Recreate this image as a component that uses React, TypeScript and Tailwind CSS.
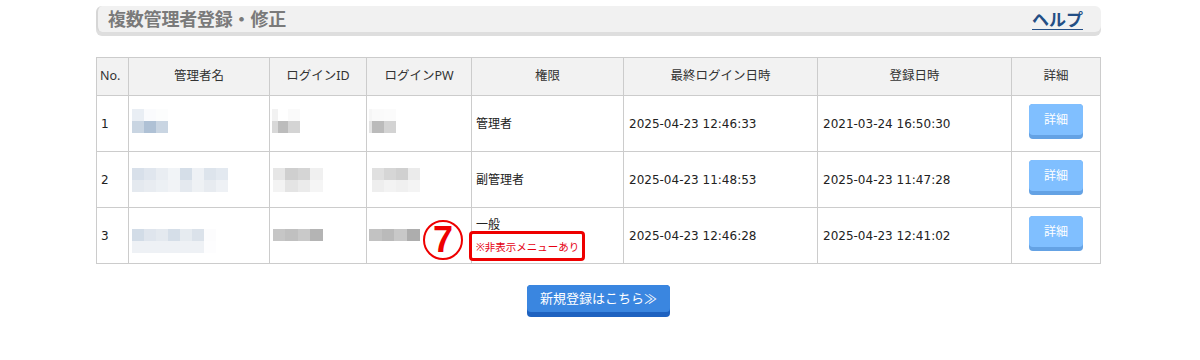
import React from "react";

type Blur = {
  widths: number[];
  rows: string[][];
  cls: string;
};

type Admin = {
  no: number;
  name: Blur;
  id: Blur;
  pw: Blur;
  role: string;
  lastLogin: string;
  created: string;
  note?: string;
};

const ADMINS: Admin[] = [
  {
    no: 1,
    name: {
      widths: [12, 12, 12],
      rows: [
        ["#e9eef4", "#fafbfd", "#fcfdfd"],
        ["#c9d5e2", "#afc1d5", "#c9d5e2"],
      ],
      cls: "ml-[3px] -translate-y-[3px]",
    },
    id: {
      widths: [6, 10, 12],
      rows: [
        ["#f2f2f2", "#ffffff", "#fafafa"],
        ["#d8d8d8", "#bcbcbc", "#d4d4d4"],
      ],
      cls: "ml-[2px] -translate-y-[3px]",
    },
    pw: {
      widths: [3, 12, 12],
      rows: [
        ["#f6f6f6", "#fafafa", "#fbfbfb"],
        ["#e4e4e4", "#bbbbbb", "#d3d3d3"],
      ],
      cls: "ml-[2px] -translate-y-[3px]",
    },
    role: "管理者",
    lastLogin: "2025-04-23 12:46:33",
    created: "2021-03-24 16:50:30",
  },
  {
    no: 2,
    name: {
      widths: [12, 12, 12, 12, 12, 12, 12, 12],
      rows: [
        ["#d8e0ea", "#e0e6ee", "#e9edf2", "#f1f4f7", "#d5dee8", "#eef1f5", "#dde4ec", "#e3e9f0"],
        ["#e4e9ef", "#e8ecf1", "#ecf0f4", "#f1f3f6", "#e4e9ef", "#eef1f4", "#e7ebf0", "#eef1f5"],
      ],
      cls: "ml-[3px]",
    },
    id: {
      widths: [12, 13, 12, 13],
      rows: [
        ["#e6e6e6", "#cfcfcf", "#d5d5d5", "#f0f0f0"],
        ["#f3f3f3", "#e4e4e4", "#ebebeb", "#f5f5f5"],
      ],
      cls: "ml-[3px]",
    },
    pw: {
      widths: [12, 12, 12, 12],
      rows: [
        ["#e0e0e0", "#d6d6d6", "#d0d0d0", "#ebebeb"],
        ["#eeeeee", "#f3f3f3", "#f0f0f0", "#f4f4f4"],
      ],
      cls: "ml-[5px]",
    },
    role: "副管理者",
    lastLogin: "2025-04-23 11:48:53",
    created: "2025-04-23 11:47:28",
  },
  {
    no: 3,
    name: {
      widths: [12, 12, 12, 12, 12, 12, 12],
      rows: [
        ["#d2dce7", "#dfe5ed", "#e4e9ef", "#d5dee8", "#e6ebf0", "#dbe2ea", "#fcfcfd"],
        ["#eef1f5", "#eef1f5", "#eef1f5", "#eef1f5", "#eef1f5", "#eef1f5", "#fdfdfe"],
      ],
      cls: "ml-[3px] translate-y-[5px]",
    },
    id: {
      widths: [12, 13, 12, 13],
      rows: [["#c6c6c6", "#c0c0c0", "#c9c9c9", "#b4b4b4"]],
      cls: "ml-[3px] -translate-y-[1px]",
    },
    pw: {
      widths: [13, 12, 13, 13],
      rows: [["#c2c2c2", "#bababa", "#c8c8c8", "#adadad"]],
      cls: "ml-[2px] -translate-y-[1px]",
    },
    role: "一般",
    note: "※非表示メニューあり",
    lastLogin: "2025-04-23 12:46:28",
    created: "2025-04-23 12:41:02",
  },
];

// pixelated placeholder for masked names / ids
const BlurBox = ({ blur }: { blur: Blur }) => (
  <div className={`flex flex-col ${blur.cls}`}>
    {blur.rows.map((row, r) => (
      <div key={r} className="flex">
        {row.map((c, i) => (
          <div key={i} className="h-[12px]" style={{ width: blur.widths[i], background: c }} />
        ))}
      </div>
    ))}
  </div>
);

const HEADERS = ["No.", "管理者名", "ログインID", "ログインPW", "権限", "最終ログイン日時", "登録日時", "詳細"];
const COL_WIDTHS = ["w-[32px]", "w-[141px]", "w-[97px]", "w-[105px]", "w-[152px]", "w-[194px]", "w-[194px]", "w-[89px]"];

const DetailButton = () => (
  <button className="w-[54px] h-[35px] rounded-[4px] bg-[#64a2e4] pb-[4px] cursor-pointer -translate-y-[2px]">
    <span className="flex h-full w-full items-center justify-center rounded-[4px] bg-[#80bfff] text-[12px] text-white">
      詳細
    </span>
  </button>
);

const latin = "font-['DejaVu_Sans','Noto_Sans_CJK_JP',sans-serif] text-[12px]";

export default function App() {
  return (
    <div className="w-[1200px] h-[360px] bg-white pl-[96px] pt-[6px] text-[#222] font-['Noto_Sans','Noto_Sans_CJK_JP',sans-serif]">
      {/* Page title bar */}
      <div className="w-[1005px] h-[26px] rounded-[6px] bg-[#f1f1f1] border-l-2 border-[#d6d6d6] shadow-[0_4px_0_#dedede] flex items-center justify-between pl-[10px] pr-[18px]">
        <h1 className="text-[18px] font-bold text-[#7a7a7a] leading-none tracking-[-0.2px]">
          複数管理者登録・修正
        </h1>
        <a href="#" className="text-[17px] font-bold text-[#234e85] underline underline-offset-[3px] leading-none">
          ヘルプ
        </a>
      </div>

      {/* Admin table */}
      <div className="relative mt-[25px] w-[1005px]">
        <table className="table-fixed w-[1005px] border-collapse text-[12px]">
          <colgroup>
            {COL_WIDTHS.map((w, i) => (
              <col key={i} className={w} />
            ))}
          </colgroup>
          <thead>
            <tr className="h-[38px]">
              {HEADERS.map((h, i) => (
                <th
                  key={h}
                  className={`border border-[#cccccc] bg-[#f2f2f2] font-normal text-[#333] text-[12.5px] ${
                    i === 0 ? "text-left pl-[3px]" : "text-center"
                  }`}
                >
                  {h}
                </th>
              ))}
            </tr>
          </thead>
          <tbody>
            {ADMINS.map((a) => (
              <tr key={a.no} className="h-[56px]">
                <td className={`border border-[#cccccc] pl-[4px] ${latin}`}>{a.no}</td>
                <td className="border border-[#cccccc]">
                  <BlurBox blur={a.name} />
                </td>
                <td className="border border-[#cccccc]">
                  <BlurBox blur={a.id} />
                </td>
                <td className="border border-[#cccccc]">
                  <BlurBox blur={a.pw} />
                </td>
                <td className="border border-[#cccccc] pl-[4px]">
                  <div className="leading-[16px]">{a.role}</div>
                  {a.note && (
                    <div className="mt-[7px] text-[10.5px] leading-[14px] text-[#e60012]">{a.note}</div>
                  )}
                </td>
                <td className={`border border-[#cccccc] pl-[5px] ${latin}`}>{a.lastLogin}</td>
                <td className={`border border-[#cccccc] pl-[5px] ${latin}`}>{a.created}</td>
                <td className="border border-[#cccccc] text-center">
                  <DetailButton />
                </td>
              </tr>
            ))}
          </tbody>
        </table>

        {/* Annotation ⑦ */}
        <div className="absolute left-[327px] top-[163px] w-[40px] h-[40px] rounded-full border-2 border-[#ee0000] flex items-center justify-center">
          <span className="text-[36px] font-bold leading-none text-[#ee0000] font-['Liberation_Sans',sans-serif] -mt-[1px]">
            7
          </span>
        </div>
        <div className="absolute left-[373px] top-[174px] w-[116px] h-[30px] rounded-[4px] border-[3px] border-[#ee0000]" />
      </div>

      {/* New registration */}
      <div className="w-[1005px] flex justify-center mt-[21px]">
        <button className="w-[143px] h-[32px] rounded-[4px] bg-[#1e62c0] pb-[5px] cursor-pointer">
          <span className="flex h-full w-full items-center justify-center rounded-[4px] bg-[#3a86e0] text-[13px] text-white">
            新規登録はこちら≫
          </span>
        </button>
      </div>
    </div>
  );
}
